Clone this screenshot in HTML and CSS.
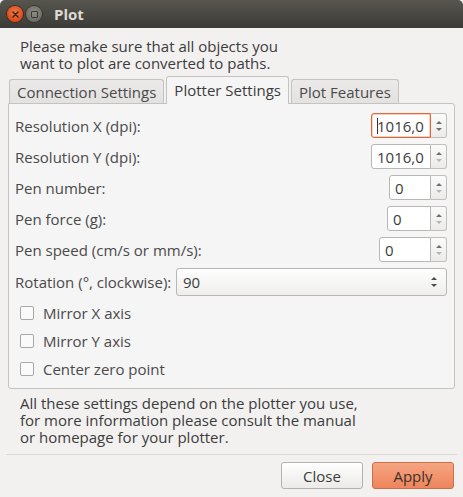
FILE: index.html
```html
<!DOCTYPE html>
<html>
<head>
<meta charset="utf-8">
<link rel="stylesheet" href="styles.css">
</head>
<body>
<div class="window">
  <div class="titlebar">
    <span class="wbtn wbtn-close"><svg width="9" height="9" viewBox="0 0 9 9"><path d="M2 2L7 7M7 2L2 7" stroke="#3a2a22" stroke-width="1.6" stroke-linecap="round"/></svg></span>
    <span class="wbtn wbtn-min"><span class="sq"></span></span>
    <span class="title">Plot</span>
  </div>
  <div class="content">
    <div class="intro"><div class="line">Please make sure that all objects you</div><div class="line">want to plot are converted to paths.</div></div>
    <div class="notebook">
      <div class="tabs">
        <div class="tab">Connection Settings</div>
        <div class="tab active">Plotter Settings</div>
        <div class="tab">Plot Features</div>
      </div>
      <div class="pane">
        <div class="row">
          <span class="label">Resolution X (dpi):</span>
          <div class="spin focus"><div class="field w59"><span class="caret"></span>1016,0</div><div class="arrows"><span class="up"></span><span class="down"></span></div></div>
        </div>
        <div class="row">
          <span class="label">Resolution Y (dpi):</span>
          <div class="spin"><div class="field w59">1016,0</div><div class="arrows"><span class="up"></span><span class="down dim"></span></div></div>
        </div>
        <div class="row">
          <span class="label">Pen number:</span>
          <div class="spin"><div class="field w42">0</div><div class="arrows"><span class="up"></span><span class="down dim"></span></div></div>
        </div>
        <div class="row">
          <span class="label">Pen force (g):</span>
          <div class="spin"><div class="field w44">0</div><div class="arrows"><span class="up"></span><span class="down dim"></span></div></div>
        </div>
        <div class="row">
          <span class="label">Pen speed (cm/s or mm/s):</span>
          <div class="spin"><div class="field w52">0</div><div class="arrows"><span class="up"></span><span class="down dim"></span></div></div>
        </div>
        <div class="row combo-row">
          <span class="label">Rotation (°, clockwise):</span>
          <div class="combo"><span>90</span><div class="arrows plain"><span class="up"></span><span class="down"></span></div></div>
        </div>
        <div class="check-row"><span class="box"></span><span class="label">Mirror X axis</span></div>
        <div class="check-row"><span class="box"></span><span class="label">Mirror Y axis</span></div>
        <div class="check-row"><span class="box"></span><span class="label">Center zero point</span></div>
      </div>
    </div>
    <div class="note"><div class="line">All these settings depend on the plotter you use,</div><div class="line">for more information please consult the manual</div><div class="line">or homepage for your plotter.</div></div>
  </div>
  <div class="separator"></div>
  <div class="actions">
    <button class="btn">Close</button>
    <button class="btn apply">Apply</button>
  </div>
</div>
</body>
</html>
```
FILE: styles.css
```css
* { box-sizing: border-box; }
html, body { margin: 0; padding: 0; background: #ffffff; }
body {
  font-family: "Open Sans", "DejaVu Sans", sans-serif;
  font-size: 15px;
  color: #3c3c3c;
}
.window {
  width: 463px;
  height: 497px;
  background: #f2f1f0;
  display: flex;
  flex-direction: column;
  overflow: hidden;
}
.titlebar {
  height: 28px;
  flex: none;
  background: linear-gradient(#57554e, #3c3b37);
  border-radius: 5px 5px 0 0;
  display: flex;
  align-items: center;
  padding-left: 7px;
}
.wbtn {
  width: 16px;
  height: 16px;
  border-radius: 50%;
  display: flex;
  align-items: center;
  justify-content: center;
  margin-right: 3px;
}
.wbtn-close {
  background: radial-gradient(circle at 50% 40%, #f47a4a, #dd4814 70%);
  box-shadow: 0 0 0 1px #3a2f28;
}
.wbtn-min {
  background: radial-gradient(circle at 50% 40%, #908d87, #6f6c66 70%);
  box-shadow: 0 0 0 1px #36342f;
}
.wbtn-min .sq {
  width: 7px;
  height: 7px;
  border: 1px solid #3a3834;
  border-radius: 1px;
}
.title {
  margin-left: 9px;
  color: #dfdbd2;
  font-weight: bold;
  font-size: 15px;
}
.content {
  flex: 1;
  padding: 10px 8px 0 8px;
}
.line {
  height: 17px;
  line-height: 17px;
  white-space: nowrap;
}
.intro {
  margin: 0 0 4px 12px;
}
.tabs {
  display: flex;
  align-items: flex-end;
  gap: 2px;
  padding-left: 1px;
  height: 27px;
  position: relative;
  z-index: 1;
}
.tab {
  height: 24px;
  padding: 0 7px;
  display: flex;
  align-items: center;
  background: linear-gradient(#ebeae9, #e3e2e0);
  border: 1px solid #c4c3c0;
  border-bottom: none;
  border-radius: 3px 3px 0 0;
  color: #4a4a4a;
}
.tab.active {
  height: 28px;
  margin-bottom: -1px;
  background: #f5f5f5;
  padding-bottom: 2px;
  color: #3c3c3c;
}
.pane {
  border: 1px solid #c4c3c0;
  border-radius: 0 3px 3px 3px;
  background: #f5f5f5;
  padding: 9px 7px 5px 6px;
  height: 286px;
}
.row {
  display: flex;
  align-items: center;
  justify-content: space-between;
  height: 25px;
  margin-bottom: 6px;
}
.label { color: #4a4a4a; }
.spin {
  display: flex;
  height: 25px;
}
.field {
  height: 25px;
  background: #ffffff;
  border: 1px solid #b8b7b3;
  border-radius: 3px 0 0 3px;
  display: flex;
  align-items: center;
  padding-left: 5px;
  color: #3c3c3c;
  position: relative;
}
.w59 { width: 60px; }
.w42 { width: 42px; }
.w44 { width: 44px; }
.w52 { width: 52px; }
.spin.focus .field {
  border-color: #e2683c;
  box-shadow: inset 0 0 0 0.5px #f0a283;
}
.caret {
  width: 1px;
  height: 16px;
  background: #333;
  margin-right: -1px;
}
.arrows {
  width: 16px;
  height: 25px;
  border: 1px solid #c0bfbb;
  border-left: none;
  border-radius: 0 3px 3px 0;
  background: linear-gradient(#fbfbfb, #ecebea);
  display: flex;
  flex-direction: column;
  align-items: center;
  justify-content: center;
  gap: 4px;
}
.arrows .up {
  width: 0; height: 0;
  border-left: 3px solid transparent;
  border-right: 3px solid transparent;
  border-bottom: 3px solid #6e6e6e;
}
.arrows .down {
  width: 0; height: 0;
  border-left: 3px solid transparent;
  border-right: 3px solid transparent;
  border-top: 3px solid #6e6e6e;
}
.arrows .down.dim { border-top-color: #b5b5b5; }
.combo-row { height: 28px; margin-bottom: 3px; }
.combo {
  width: 271px;
  height: 28px;
  border: 1px solid #b8b7b3;
  border-radius: 3px;
  background: linear-gradient(#fefefe, #efeeed);
  display: flex;
  align-items: center;
  justify-content: space-between;
  padding: 0 4px 0 6px;
  color: #3c3c3c;
}
.arrows.plain {
  border: none;
  background: none;
  height: auto;
  width: 16px;
  gap: 4px;
}
.arrows.plain .up { border-bottom-color: #4c4c4c; }
.arrows.plain .down { border-top-color: #4c4c4c; }
.check-row {
  display: flex;
  align-items: center;
  height: 28px;
  padding-left: 5px;
}
.box {
  width: 14px;
  height: 14px;
  border: 1px solid #a9a8a4;
  border-radius: 2px;
  background: #fafafa;
  margin-right: 9px;
}
.note {
  margin: 6px 0 0 12px;
}
.separator {
  height: 1px;
  background: #dcdad6;
  margin: 0 6px;
  flex: none;
}
.actions {
  flex: none;
  height: 42px;
  display: flex;
  justify-content: flex-end;
  align-items: flex-start;
  padding: 7px 9px 0 0;
  gap: 9px;
}
.btn {
  width: 82px;
  height: 27px;
  font-family: inherit;
  font-size: 15px;
  color: #3c3c3c;
  border: 1px solid #b3b2ae;
  border-radius: 3px;
  background: linear-gradient(#ffffff, #ebeae8);
  padding: 0;
}
.btn.apply {
  background: linear-gradient(#f6a582, #ee845c);
  border-color: #c6704c;
  color: #3c3029;
}
```
